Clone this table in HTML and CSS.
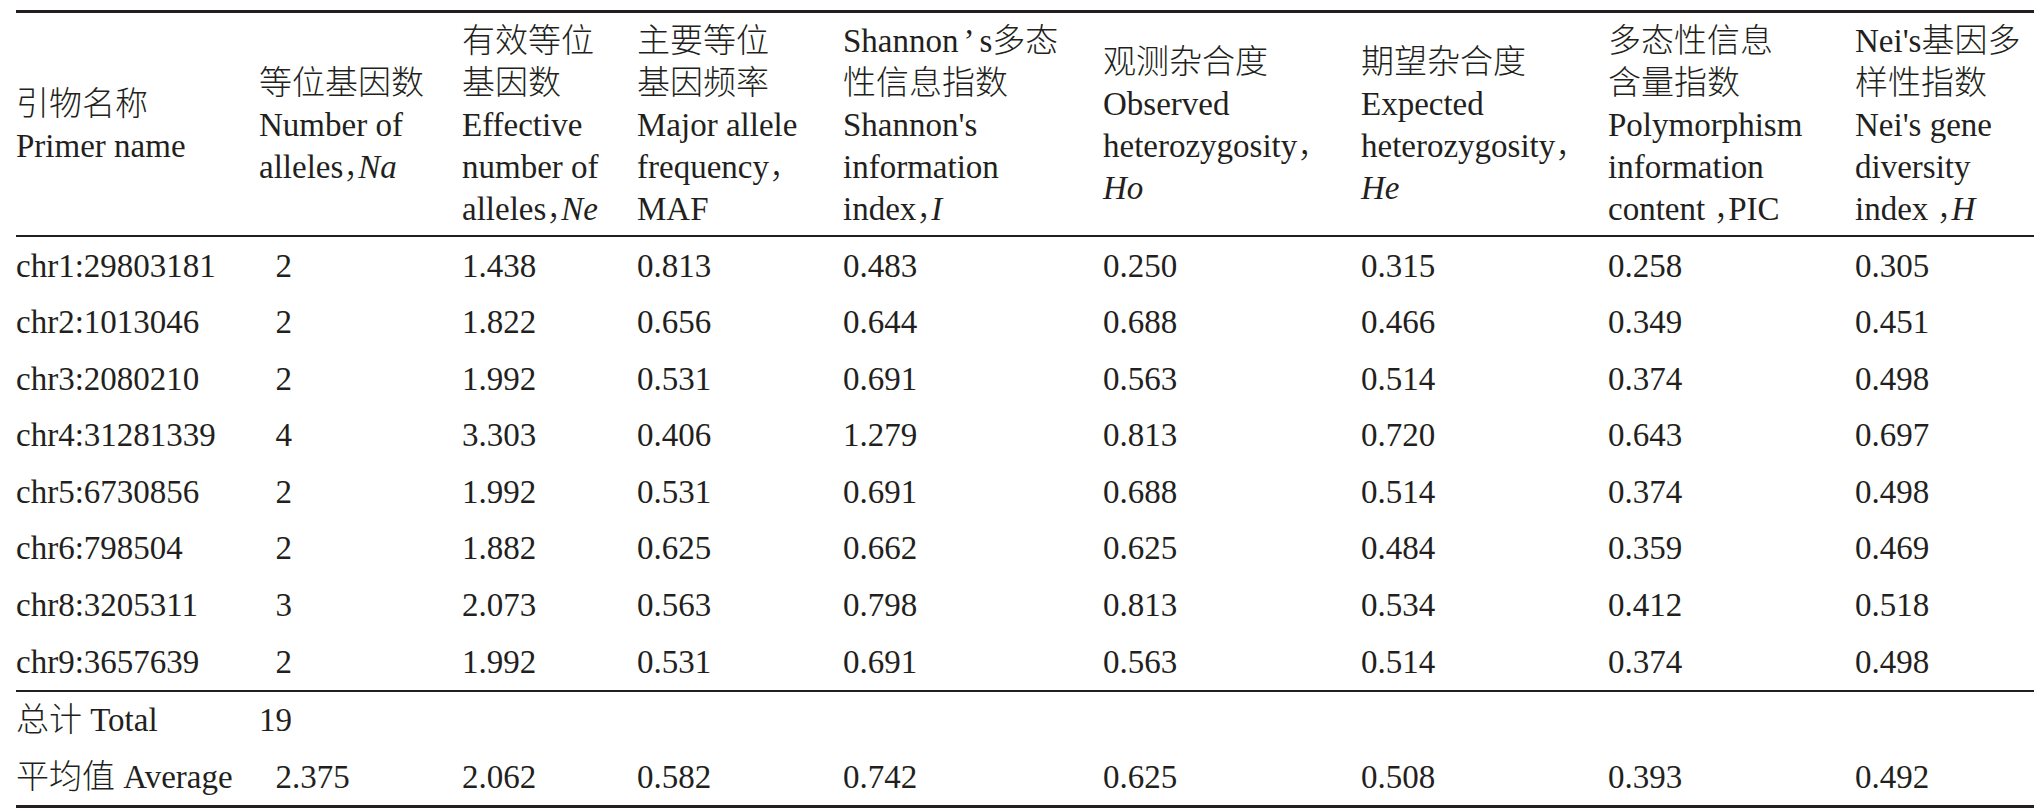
FILE: index.html
```html
<!DOCTYPE html>
<html lang="zh">
<head>
<meta charset="utf-8">
<title>引物多态性统计</title>
<link rel="stylesheet" href="styles.css">
</head>
<body>
<div class="page">
<table class="tbl">
<colgroup>
<col class="w1"><col class="w2"><col class="w3"><col class="w4"><col class="w5"><col class="w6"><col class="w7"><col class="w8"><col class="w9">
</colgroup>
<thead>
<tr>
<th>引物名称<br>Primer name</th>
<th>等位基因数<br>Number of<br>alleles<span class="cm">，</span><i>Na</i></th>
<th>有效等位<br>基因数<br>Effective<br>number of<br>alleles<span class="cm">，</span><i>Ne</i></th>
<th>主要等位<br>基因频率<br>Major allele<br>frequency<span class="cm">，</span><br>MAF</th>
<th>Shannon<span class="apos">’</span>s多态<br>性信息指数<br>Shannon's<br>information<br>index<span class="cm">，</span><i>I</i></th>
<th>观测杂合度<br>Observed<br>heterozygosity<span class="cm">，</span><br><i>Ho</i></th>
<th>期望杂合度<br>Expected<br>heterozygosity<span class="cm">，</span><br><i>He</i></th>
<th>多态性信息<br>含量指数<br>Polymorphism<br>information<br>content <span class="cm">，</span>PIC</th>
<th>Nei's基因多<br>样性指数<br>Nei's gene<br>diversity<br>index <span class="cm">，</span><i>H</i></th>
</tr>
</thead>
<tbody>
<tr><td>chr1:29803181</td><td class="ind">2</td><td>1.438</td><td>0.813</td><td>0.483</td><td>0.250</td><td>0.315</td><td>0.258</td><td>0.305</td></tr>
<tr><td>chr2:1013046</td><td class="ind">2</td><td>1.822</td><td>0.656</td><td>0.644</td><td>0.688</td><td>0.466</td><td>0.349</td><td>0.451</td></tr>
<tr><td>chr3:2080210</td><td class="ind">2</td><td>1.992</td><td>0.531</td><td>0.691</td><td>0.563</td><td>0.514</td><td>0.374</td><td>0.498</td></tr>
<tr><td>chr4:31281339</td><td class="ind">4</td><td>3.303</td><td>0.406</td><td>1.279</td><td>0.813</td><td>0.720</td><td>0.643</td><td>0.697</td></tr>
<tr><td>chr5:6730856</td><td class="ind">2</td><td>1.992</td><td>0.531</td><td>0.691</td><td>0.688</td><td>0.514</td><td>0.374</td><td>0.498</td></tr>
<tr><td>chr6:798504</td><td class="ind">2</td><td>1.882</td><td>0.625</td><td>0.662</td><td>0.625</td><td>0.484</td><td>0.359</td><td>0.469</td></tr>
<tr><td>chr8:3205311</td><td class="ind">3</td><td>2.073</td><td>0.563</td><td>0.798</td><td>0.813</td><td>0.534</td><td>0.412</td><td>0.518</td></tr>
<tr class="sep"><td>chr9:3657639</td><td class="ind">2</td><td>1.992</td><td>0.531</td><td>0.691</td><td>0.563</td><td>0.514</td><td>0.374</td><td>0.498</td></tr>
<tr><td>总计 Total</td><td>19</td><td></td><td></td><td></td><td></td><td></td><td></td><td></td></tr>
<tr><td>平均值 Average</td><td class="ind">2.375</td><td>2.062</td><td>0.582</td><td>0.742</td><td>0.625</td><td>0.508</td><td>0.393</td><td>0.492</td></tr>
</tbody>
</table>
</div>
</body>
</html>
```

FILE: styles.css
```css
html, body {
  margin: 0;
  padding: 0;
  background: #ffffff;
}

body {
  color: #231f20;
  font-family: "Liberation Serif", "Noto Sans CJK SC", serif;
  font-size: 33px;
  font-weight: 300;
}

.page {
  padding: 10px 0 0 16px;
}

.tbl {
  border-collapse: separate;
  border-spacing: 0;
  table-layout: fixed;
  width: 2018px;
  border-top: 3px solid #231f20;
  border-bottom: 3px solid #231f20;
}

.w1 { width: 243px; }
.w2 { width: 203px; }
.w3 { width: 175px; }
.w4 { width: 206px; }
.w5 { width: 260px; }
.w6 { width: 258px; }
.w7 { width: 247px; }
.w8 { width: 247px; }
.w9 { width: 179px; }

.tbl th {
  font-weight: 300;
  text-align: left;
  vertical-align: middle;
  line-height: 42px;
  padding: 6.5px 0 5.5px 0;
  border-bottom: 2px solid #231f20;
  white-space: nowrap;
}

.tbl td {
  text-align: left;
  vertical-align: top;
  padding: 1.5px 0 0 0;
  line-height: 55.1px;
  white-space: nowrap;
}

.tbl td.ind {
  padding-left: 16.5px;
}

.tbl tr.sep td {
  border-bottom: 2px solid #231f20;
}

.tbl i {
  font-style: italic;
}

.cm {
  letter-spacing: -0.55em;
}

.apos {
  margin: 0 5px;
}
```
